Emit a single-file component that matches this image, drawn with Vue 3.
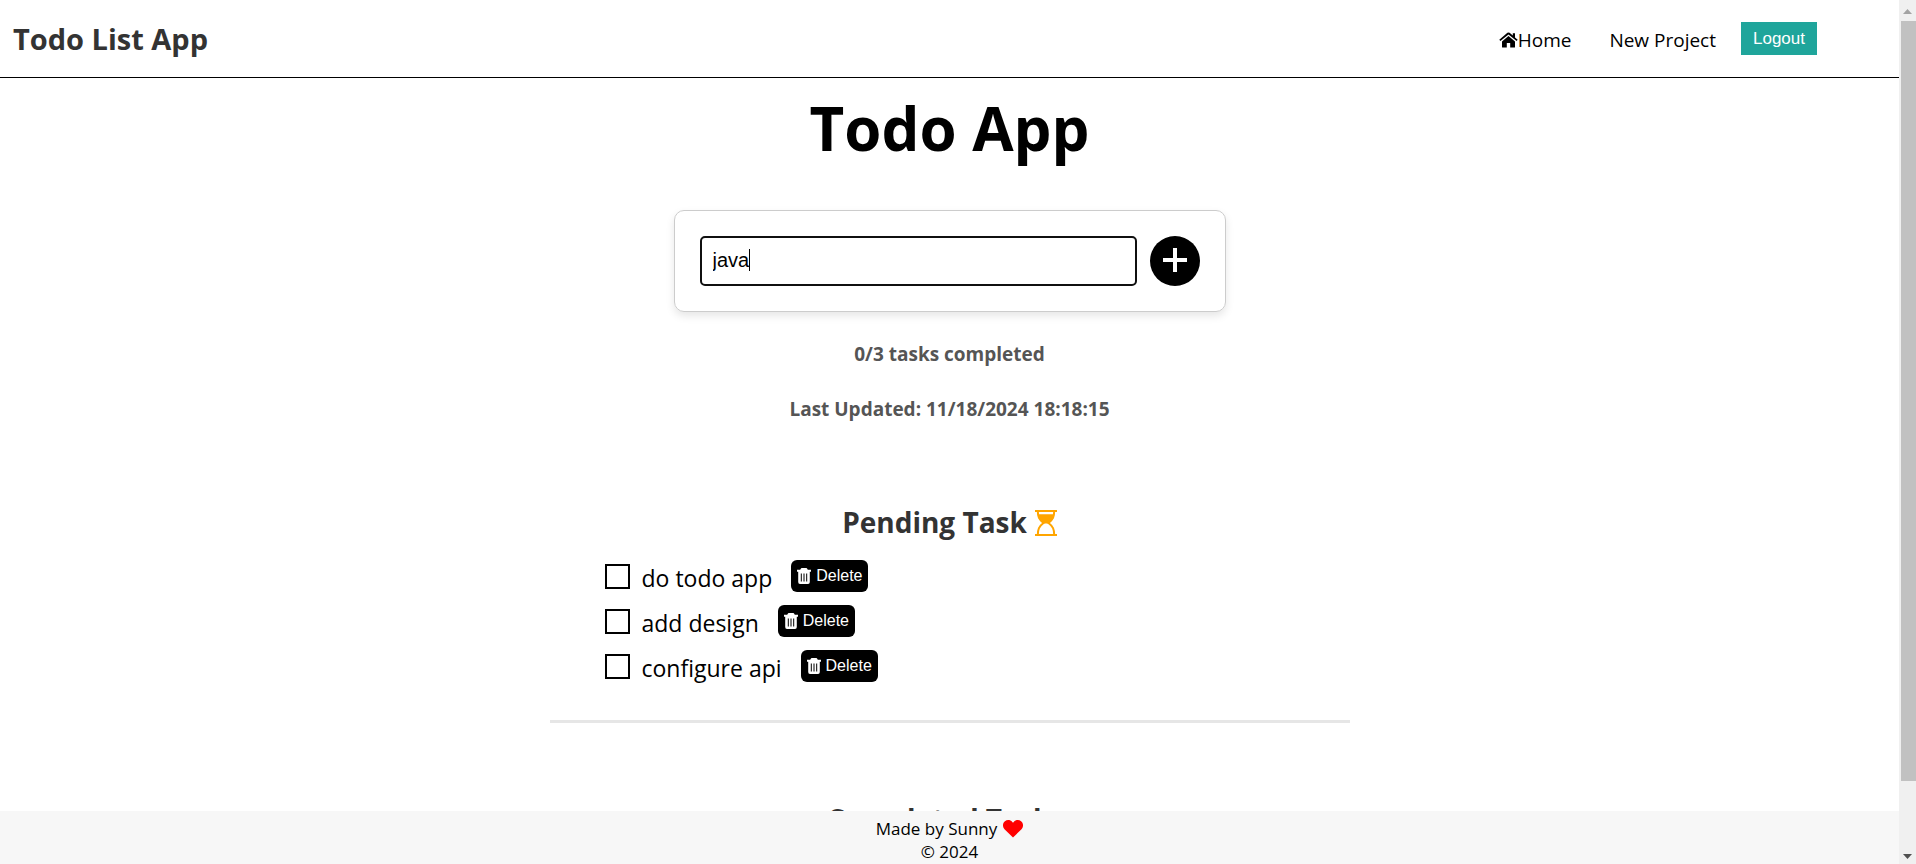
<script setup>
import { ref } from 'vue'

const draft = ref('java')
const tasks = ref([
  { id: 1, title: 'do todo app', done: false },
  { id: 2, title: 'add design', done: false },
  { id: 3, title: 'configure api', done: false },
])

function addTask() {
  const title = draft.value.trim()
  if (!title) return
  tasks.value.push({ id: Date.now(), title, done: false })
  draft.value = ''
}

function removeTask(id) {
  tasks.value = tasks.value.filter((t) => t.id !== id)
}
</script>

<template>
  <div class="shell">
    <div class="page">
      <header class="navbar">
        <div class="brand">Todo List App</div>
        <nav class="nav">
          <a class="nav-link home" href="#">
            <svg class="home-icon" viewBox="0 0 19 16" aria-hidden="true">
              <path d="M9.500 4 L3 9.400 V15 Q3 15.500 3.500 15.500 H7.800 V11 H11.200 V15.500 H15.500 Q16 15.500 16 15 V9.400 Z" />
              <path d="M18.700 7.700 L16 5.400 V1.200 H13.800 V3.500 L10.600 .8 Q9.500 0 8.400 .8 L.3 7.700 L1.400 9.100 L9.500 2.600 L17.600 9.100 Z" />
            </svg>Home</a>
          <a class="nav-link" href="#">New Project</a>
          <button class="logout" type="button">Logout</button>
        </nav>
      </header>

      <main class="content">
        <h1 class="title">Todo App</h1>

        <form class="card" @submit.prevent="addTask">
          <div class="field">
            <input v-model="draft" class="entry" type="text" aria-label="New task" />
            <span v-if="draft === 'java'" class="caret"></span>
          </div>
          <button class="add" type="submit" aria-label="Add task">
            <svg viewBox="0 0 24 24" aria-hidden="true"><path d="M10 0h4v10h10v4H14v10h-4V14H0v-4h10z" /></svg>
          </button>
        </form>

        <p class="status">0/3 tasks completed</p>
        <p class="status">Last Updated: 11/18/2024 18:18:15</p>

        <section class="section">
          <h2 class="heading">
            Pending Task
            <svg class="hourglass" viewBox="0 0 22 26" aria-hidden="true">
              <path class="frame" d="M0 1H22M0 25H22M2.800 1C2.800 7 4 9.500 8.500 13C4 16.500 2.800 19 2.800 25M19.200 1C19.200 7 18 9.500 13.500 13C18 16.500 19.200 19 19.200 25" />
              <path class="sand" d="M3 4.200H19C18.600 8.500 17 11 13.500 13.500H8.500C5 11 3.400 8.500 3 4.200Z" />
            </svg>
          </h2>
          <ul class="list">
            <li v-for="task in tasks" :key="task.id" class="task">
              <input :id="'task-' + task.id" v-model="task.done" class="tick" type="checkbox" />
              <label class="name" :for="'task-' + task.id">{{ task.title }}</label>
              <button class="delete" type="button" @click="removeTask(task.id)">
                <svg class="trash" viewBox="0 0 14 16" aria-hidden="true">
                  <path class="lid" d="M0 2.700H14M4 2.700Q4.300 .8 5.500 .8H8.500Q9.700 .8 10 2.700" />
                  <path d="M1.200 3H12.800V14Q12.800 16 11 16H3Q1.200 16 1.200 14Z" />
                  <path class="slots" d="M4.300 5.500V13.500M7 5.500V13.500M9.700 5.500V13.500" />
                </svg>
                Delete
              </button>
            </li>
          </ul>
        </section>
        <hr class="rule" />
        <section class="section completed">
          <h2 class="heading">
            Completed Task
            <svg class="done-icon" viewBox="0 0 14 14" aria-hidden="true">
              <path d="M1 7L5 11L13 3" />
            </svg>
          </h2>
        </section>
      </main>

      <footer class="footer">
        <div class="made">
          Made by Sunny
          <svg class="heart" viewBox="0 0 20 18" aria-hidden="true">
            <path d="M10 17.500L1.500 9.300C-.8 6.800-.4 3.200 1.900 1.300C4.200-.6 7.400-.1 9.300 1.900L10 2.700L10.700 1.900C12.600-.1 15.800-.6 18.100 1.300C20.400 3.200 20.800 6.800 18.500 9.300Z" />
          </svg>
        </div>
        <div>© 2024</div>
      </footer>
    </div>

    <div class="scrollbar" aria-hidden="true">
      <svg class="arrow up" viewBox="0 0 17 17"><path d="M4 14L8.500 9L13 14Z" /></svg>
      <div class="track"><div class="thumb"></div></div>
      <svg class="arrow down" viewBox="0 0 17 17"><path d="M4 7L8.500 12L13 7Z" /></svg>
    </div>
  </div>
</template>

<style>
body {
  margin: 0;
  background: #fff;
}
</style>

<style scoped>
* {
  box-sizing: border-box;
}

.shell {
  display: flex;
  height: 100vh;
  color: #000;
  font-family: "Segoe UI", "Open Sans", sans-serif;
}

.page {
  display: flex;
  flex: 1;
  flex-direction: column;
  min-width: 0;
}

.navbar {
  display: flex;
  align-items: center;
  justify-content: space-between;
  flex: none;
  height: 78px;
  padding: 0 82px 0 13px;
  border-bottom: 1px solid #000;
}

.brand {
  color: #333;
  font-size: 29px;
  font-weight: 700;
  line-height: 40px;
}

.nav {
  display: flex;
  align-items: center;
}

.nav-link {
  display: flex;
  align-items: center;
  margin-right: 25px;
  padding-top: 2px;
  color: #000;
  font-size: 19px;
  line-height: 28px;
  text-decoration: none;
}

.home {
  margin-right: 38px;
}

.home-icon {
  width: 19px;
  height: 16px;
}

.logout {
  width: 76px;
  height: 33px;
  padding: 0;
  border: 0;
  background: #1fa59b;
  color: #fff;
  font: 17px "Liberation Sans", Arial, sans-serif;
}

.content {
  display: flex;
  flex: 1;
  flex-direction: column;
  align-items: center;
  min-height: 0;
  overflow: hidden;
}

.title {
  flex: none;
  margin: 9px 0 41px;
  font-size: 60px;
  font-weight: 700;
  line-height: 82px;
}

.card {
  display: flex;
  flex: none;
  gap: 13px;
  width: 552px;
  max-width: 100%;
  padding: 25px;
  border: 1px solid #ccc;
  border-radius: 10px;
  box-shadow: 0 4px 8px rgba(0, 0, 0, 0.1);
}

.field {
  position: relative;
  flex: 1;
}

.entry {
  width: 100%;
  height: 50px;
  padding: 0 11px 2px;
  border: 2px solid #101010;
  border-radius: 5px;
  outline: 0;
  background: #fff;
  color: #000;
  font: 20px "Liberation Sans", Arial, sans-serif;
}

.caret {
  position: absolute;
  top: 13px;
  left: 49px;
  width: 1px;
  height: 22px;
  background: #000;
}

.add {
  display: grid;
  place-items: center;
  width: 50px;
  height: 50px;
  padding: 0;
  border: 0;
  border-radius: 50%;
  background: #000;
}

.add svg {
  width: 24px;
  height: 24px;
  margin-bottom: 2px;
  fill: #fff;
}

.status {
  flex: none;
  margin: 28px 0 0;
  color: #555;
  font-size: 19px;
  font-weight: 700;
  line-height: 27px;
}

.card + .status {
  margin-top: 29px;
}

.section {
  flex: none;
  width: 800px;
  max-width: 100%;
  padding-top: 79px;
}

.completed {
  padding-top: 76px;
}

.heading {
  display: flex;
  align-items: center;
  justify-content: center;
  gap: 8px;
  margin: 0;
  color: #333;
  font-size: 28px;
  font-weight: 700;
  line-height: 40px;
}

.hourglass {
  width: 22px;
  height: 26px;
  margin-top: 2px;
}

.hourglass .frame {
  fill: none;
  stroke: #ffa500;
  stroke-width: 2;
}

.hourglass .sand {
  fill: #ffa500;
}

.done-icon {
  width: 14px;
  height: 14px;
  fill: none;
  stroke: #008000;
  stroke-width: 3;
}

.list {
  display: grid;
  gap: 5px;
  margin: 14px 0 0;
  padding: 0 0 0 55px;
  list-style: none;
}

.task {
  display: flex;
  align-items: center;
  height: 40px;
}

.tick {
  width: 25px;
  height: 25px;
  margin: 0 12px 0 0;
  border: 2px solid #000;
  appearance: none;
}

.tick:checked {
  background: #000;
}

.name {
  padding-top: 3px;
  font-size: 23px;
  line-height: 32px;
}

.delete {
  display: flex;
  align-items: center;
  gap: 5px;
  height: 32px;
  margin-left: 19px;
  padding: 0 6px;
  border: 0;
  border-radius: 6px;
  background: #000;
  color: #fff;
  font: 16px "Liberation Sans", Arial, sans-serif;
}

.trash {
  width: 14px;
  height: 16px;
  fill: #fff;
}

.trash .lid {
  fill: none;
  stroke: #fff;
  stroke-width: 2;
}

.trash .slots {
  fill: none;
  stroke: #000;
  stroke-width: 1;
}

.rule {
  flex: none;
  width: 800px;
  max-width: 100%;
  height: 3px;
  margin: 34px 0 0;
  border: 0;
  background: #e6e6e6;
}

.footer {
  flex: none;
  height: 53px;
  padding-top: 6px;
  background: #f7f7f7;
  font-size: 17px;
  line-height: 23px;
  text-align: center;
}

.made {
  display: flex;
  align-items: center;
  justify-content: center;
  gap: 6px;
}

.heart {
  width: 20px;
  height: 18px;
  fill: #f00;
}

.scrollbar {
  display: flex;
  flex: none;
  flex-direction: column;
  width: 17px;
  background: #f0f0f0;
}

.arrow {
  flex: none;
  width: 17px;
  height: 17px;
}

.up {
  margin-bottom: 4px;
  fill: #a3a3a3;
}

.down {
  fill: #505050;
}

.track {
  flex: 1;
  padding-left: 2px;
}

.thumb {
  height: 92%;
  background: #c1c1c1;
}
</style>
